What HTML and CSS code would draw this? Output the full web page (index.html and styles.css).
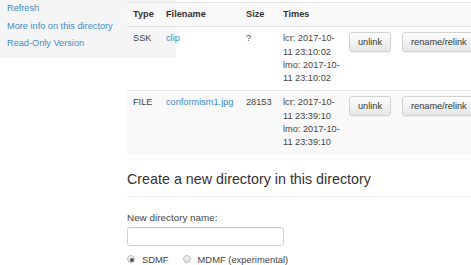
FILE: index.html
```html
<!DOCTYPE html>
<html>
<head>
<meta charset="utf-8">
<link rel="stylesheet" href="styles.css">
</head>
<body>
<div class="sidebar">
  <ul class="side-nav">
    <li><a href="#">Refresh</a></li>
    <li><a href="#">More info on this directory</a></li>
    <li><a href="#">Read-Only Version</a></li>
  </ul>
</div>
<div class="main">
  <div class="above"></div>
  <table class="listing">
    <colgroup>
      <col class="c-type"><col class="c-name"><col class="c-size"><col class="c-times"><col class="c-unlink"><col class="c-rename">
    </colgroup>
    <tr class="shade head">
      <th>Type</th><th>Filename</th><th>Size</th><th>Times</th><th></th><th></th>
    </tr>
    <tr>
      <td>SSK</td>
      <td><a href="#">clip</a></td>
      <td>?</td>
      <td class="times">lcr: 2017-10-<br>11 23:10:02<br>lmo: 2017-10-<br>11 23:10:02</td>
      <td><button class="btn">unlink</button></td>
      <td><button class="btn">rename/relink</button></td>
    </tr>
    <tr class="shade sep">
      <td>FILE</td>
      <td><a href="#">conformism1.jpg</a></td>
      <td>28153</td>
      <td class="times">lcr: 2017-10-<br>11 23:39:10<br>lmo: 2017-10-<br>11 23:39:10</td>
      <td><button class="btn">unlink</button></td>
      <td><button class="btn">rename/relink</button></td>
    </tr>
  </table>

  <h3 class="section-title">Create a new directory in this directory</h3>
  <form class="mkdir">
    <label class="field-label" for="dirname">New directory name:</label>
    <input class="text-input" id="dirname" type="text">
    <div class="radios">
      <label class="radio"><input type="radio" name="fmt" checked><span>SDMF</span></label>
      <label class="radio"><input type="radio" name="fmt"><span>MDMF (experimental)</span></label>
    </div>
  </form>
</div>
</body>
</html>
```

FILE: styles.css
```css
html, body {
  margin: 0;
  padding: 0;
  overflow: hidden;
  background: #fff;
}
body {
  position: relative;
  font-family: "Liberation Sans", Arial, sans-serif;
  font-size: 9.2px;
  line-height: 13.3px;
  color: #444;
}
a {
  color: #428bca;
  text-decoration: none;
}
.sidebar {
  position: absolute;
  left: 0;
  top: 0;
  width: 176px;
  height: 58px;
  background: #f5f5f5;
  z-index: 0;
}
.side-nav {
  list-style: none;
  margin: 0;
  padding: 0 0 0 7px;
}
.side-nav li {
  height: 17.5px;
  line-height: 17.5px;
}
.main {
  position: relative;
  z-index: 1;
  margin-left: 127px;
  width: 420px;
}
.above {
  height: 2px;
  border-bottom: 1px solid #e3e3e3;
}
.listing {
  border-collapse: collapse;
  table-layout: fixed;
  width: 375px;
}
.c-type { width: 33px; }
.c-name { width: 80px; }
.c-size { width: 37px; }
.c-times { width: 66px; }
.c-unlink { width: 53px; }
.c-rename { width: 106px; }
.listing th, .listing td {
  text-align: left;
  vertical-align: top;
  padding: 5px 6px;
  line-height: 13.3px;
}
.listing th {
  font-weight: bold;
  color: #333;
  border-bottom: 1px solid #e0e0e0;
}
.shade {
  background: #f9f9f9;
}
.sep td {
  border-top: 1px solid #e3e3e3;
}
.times {
  white-space: nowrap;
}
.btn {
  font-family: inherit;
  font-size: 9.2px;
  line-height: 12px;
  color: #333;
  padding: 3px 8px;
  margin: 0;
  border: 1px solid #d2d2d2;
  border-radius: 3px;
  background: linear-gradient(#ffffff, #e6e6e6);
  box-shadow: 0 1px 1px rgba(0,0,0,0.05);
  white-space: nowrap;
}
.section-title {
  font-size: 14.3px;
  line-height: 15.7px;
  font-weight: normal;
  color: #333;
  margin: 17px 0 0 0;
  padding-bottom: 9px;
  border-bottom: 1px solid #eeeeee;
}
.mkdir {
  margin: 14px 0 0 0;
}
.field-label {
  display: block;
  font-size: 9.9px;
  line-height: 13.3px;
  color: #444;
}
.text-input {
  display: block;
  box-sizing: border-box;
  width: 157px;
  height: 19px;
  margin: 2px 0 0 0;
  border: 1px solid #cfcfcf;
  border-radius: 3px;
  background: #fff;
  box-shadow: inset 0 1px 1px rgba(0,0,0,0.06);
}
.radios {
  display: flex;
  align-items: center;
  gap: 14px;
  margin-top: 7px;
  height: 13.3px;
  font-size: 9.4px;
}
.radio {
  display: flex;
  align-items: center;
  gap: 7px;
}
.radio input {
  -webkit-appearance: none;
  appearance: none;
  margin: 0;
  width: 8px;
  height: 8px;
  border-radius: 50%;
  border: 1px solid #bdbdbd;
  background: linear-gradient(#f4f4f4, #dcdcdc);
  position: relative;
}
.radio input:checked::after {
  content: "";
  position: absolute;
  left: 2px;
  top: 2px;
  width: 4px;
  height: 4px;
  border-radius: 50%;
  background: #555;
}
```
